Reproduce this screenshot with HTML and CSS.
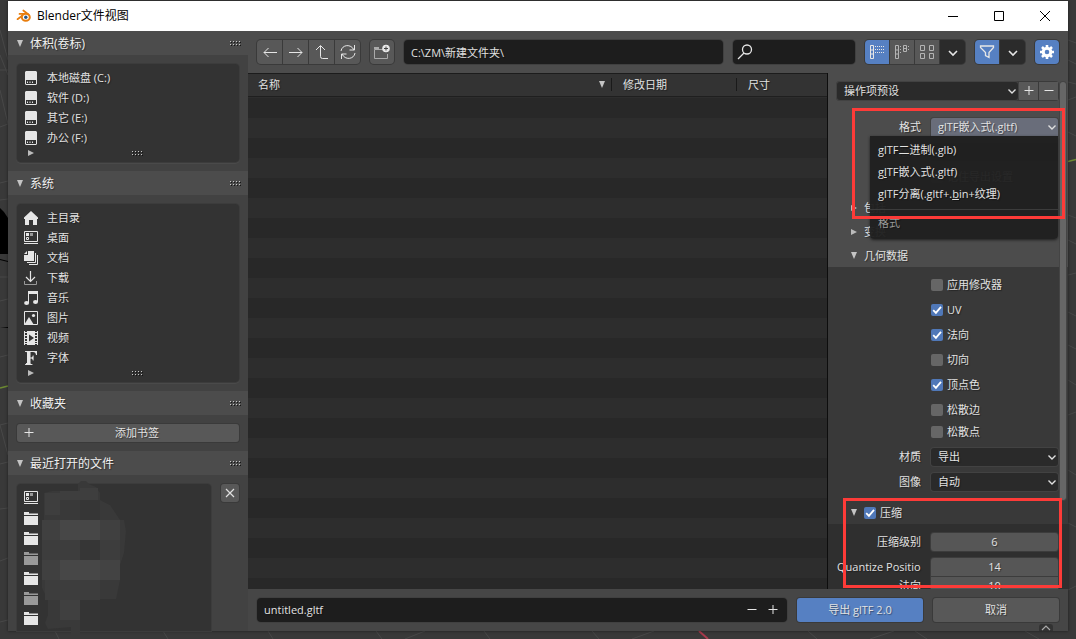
FILE: index.html
```html
<!DOCTYPE html>
<html lang="zh-CN">
<head>
<meta charset="utf-8">
<title>Blender文件视图</title>
<link rel="stylesheet" href="styles.css">
</head>
<body>
<svg width="0" height="0" class="defs" aria-hidden="true">
  <symbol id="disk" viewBox="0 0 14 14"><path fill="#e6e6e6" d="M2 0h10l1 1v12l-1 1H2l-1-1V1z"/><path fill="#333" d="M2 9h10v4H2z"/><path fill="#e6e6e6" d="M3 10.500h1v1.500H3zM5.500 10.500h1v1.500h-1zM8 10.500h1v1.500H8z"/></symbol>
  <symbol id="desk" viewBox="0 0 14 14"><path fill="none" stroke="#e6e6e6" d="M.5.5h13v10H.5z"/><path fill="#e6e6e6" d="M0 12h14v1H0zM2 2h3v3H2z"/><path fill="#999" d="M6 2h3v3H6z"/><path fill="none" stroke="#e6e6e6" d="M2.500 6.500h2v2h-2z"/></symbol>
  <symbol id="folder" viewBox="0 0 14 14"><path d="M0 1h5v1.500h9V4H0zM0 5h14v9H0z"/></symbol>
  <symbol id="down" viewBox="0 0 12 12"><path fill="none" stroke="#e0e0e0" stroke-width="1.400" d="M2.500 4.500L6 8l3.500-3.500"/></symbol>
  <symbol id="tri" viewBox="0 0 8 8"><path fill="#c4c4c4" d="M1 0h6L4 7z"/></symbol>
  <symbol id="tri-r" viewBox="0 0 8 8"><path fill="#bbb" d="M1 1v6l6-3z"/></symbol>
  <symbol id="plus" viewBox="0 0 12 12"><path fill="none" stroke="#e6e6e6" d="M1.500 5.500h9M6 1v9"/></symbol>
  <symbol id="minus" viewBox="0 0 12 12"><path fill="none" stroke="#e6e6e6" d="M1.500 5.500h9"/></symbol>
  <symbol id="grip" viewBox="0 0 11 5"><path stroke="#151515" stroke-dasharray="1 2" d="M1 1.500h10M1 4.500h10"/><path stroke="#c8c8c8" stroke-dasharray="1 2" d="M0 .5h10M0 3.500h10"/></symbol>
</svg>

<svg class="scene" viewBox="0 0 1076 639" preserveAspectRatio="none" aria-hidden="true">
  <path d="M0 30l8 30M0 55l8 20M0 70h8M0 90l8 34M0 127l8-3M0 183l8-2M0 200l8-1M0 277h8M0 301l8-2M0 357l8-2M0 425l8-2M0 425l8 30M0 464l8-2M0 509l8-1M0 561l8-3M0 622l8-2M1068 40l8 3M1068 60l8 4M1068 82l8 2M1068 100l8-3M1068 132l8 4M1068 215l8 3M1068 240l8 4M1068 275l8-2M1068 312l8 4M1068 345l8 4M1068 380l8 5M1068 415l8-3M1068 470l8 5M1068 523l8 4M1068 590l8-4M55 631l4 8M163 631l5 8M268 631l5 8M376 631l6 8M484 631l6 8M405 639l20-8M592 631l7 8M632 639l22-8M808 631l9 8M870 639l24-8M915 631l12 8M1025 631l14 8" stroke="#484848" fill="none"/>
  <path d="M0 208l4 4 4 6v36H0zM0 259v1l8 2v-1zM0 328l8-1v1H0z"/>
  <path d="M0 388l8-2M1068 161.500l8-2" stroke="#6d8a33" stroke-width="1.500"/>
  <path d="M699 631l9 8" stroke="#a83a4c" stroke-width="2"/>
</svg>

<div class="window">
  <header class="titlebar">
    <svg class="logo" viewBox="0 0 16 14"><path fill="none" stroke="#e87d0d" stroke-width="1.700" stroke-linecap="round" stroke-linejoin="round" d="M1.500 10.200L8.500 5M3.500 4.900h6M7.300 1.500l5.200 4"/><ellipse cx="9.800" cy="8.300" rx="4" ry="3.500" fill="#fff" stroke="#e87d0d" stroke-width="2"/><circle cx="9.800" cy="8.300" r="1.700" fill="#265787"/></svg>
    <h1 class="title">Blender文件视图</h1>
    <button class="winbtn" aria-label="最小化"><svg viewBox="0 0 12 12"><path d="M1 6.500h10"/></svg></button>
    <button class="winbtn" aria-label="最大化"><svg viewBox="0 0 12 12"><path d="M1.500 1.500h9v9h-9z"/></svg></button>
    <button class="winbtn" aria-label="关闭"><svg viewBox="0 0 12 12"><path d="M1 1l10 10M11 1L1 11"/></svg></button>
  </header>

  <div class="content">
    <aside class="sidebar">
      <section>
        <h2 class="phead"><svg class="tri"><use href="#tri"/></svg><span>体积(卷标)</span><svg class="grip"><use href="#grip"/></svg></h2>
        <div class="pbody"><div class="box">
          <button class="place"><svg><use href="#disk"/></svg>本地磁盘 (C:)</button>
          <button class="place"><svg><use href="#disk"/></svg>软件 (D:)</button>
          <button class="place"><svg><use href="#disk"/></svg>其它 (E:)</button>
          <button class="place"><svg><use href="#disk"/></svg>办公 (F:)</button>
          <div class="boxfoot"><svg class="tri"><use href="#tri-r"/></svg><svg class="grip"><use href="#grip"/></svg></div>
        </div></div>
      </section>
      <section>
        <h2 class="phead"><svg class="tri"><use href="#tri"/></svg><span>系统</span><svg class="grip"><use href="#grip"/></svg></h2>
        <div class="pbody"><div class="box">
          <button class="place"><svg viewBox="0 0 14 14"><path fill="#e6e6e6" d="M7 0l7 6.500V8h-1v6H9V9H5v5H1V8H0V6.500z"/></svg>主目录</button>
          <button class="place"><svg><use href="#desk"/></svg>桌面</button>
          <button class="place"><svg viewBox="0 0 14 14"><path fill="#e6e6e6" d="M4 0h6v10H0V4h4z"/><path fill="#e6e6e6" d="M0 3l3-3v3z"/><path fill="none" stroke="#e6e6e6" d="M11.500 2v9.500H3M13.500 4v9.500H5"/></svg>文档</button>
          <button class="place"><svg viewBox="0 0 14 14"><path fill="none" stroke="#e6e6e6" stroke-width="1.200" d="M6.500 0v10M2 6l4.500 4.500L11 6"/><path fill="none" stroke="#999" d="M.5 10v3.500h12V10"/></svg>下载</button>
          <button class="place"><svg viewBox="0 0 14 14"><path fill="#e6e6e6" d="M4 0h10v11h-1V3H5v9H4z"/><ellipse cx="2.600" cy="12" rx="2.500" ry="1.900" fill="#e6e6e6"/><ellipse cx="11.500" cy="11" rx="2.500" ry="1.900" fill="#e6e6e6"/></svg>音乐</button>
          <button class="place"><svg viewBox="0 0 14 14"><path fill="none" stroke="#e6e6e6" d="M9 13.500h4.500V.5H.5v13H2"/><path fill="#e6e6e6" d="M0 14l5-8 5 8z"/><circle cx="9.500" cy="4.500" r="1.600" fill="#e6e6e6"/></svg>图片</button>
          <button class="place"><svg viewBox="0 0 14 14"><path fill="#e6e6e6" d="M0 0h1v1h2V0h8v1h2V0h1v14h-1v-1h-2v1H3v-1H1v1H0z"/><path fill="#333" d="M1 2h2v2H1zM1 5h2v2H1zM1 8h2v2H1zM1 11h2v1H1zM11 2h2v2h-2zM11 5h2v2h-2zM11 8h2v2h-2zM11 11h2v1h-2zM5 3.500v7L10 7z"/></svg>视频</button>
          <button class="place"><svg viewBox="0 0 14 14"><path fill="#e6e6e6" d="M1 0h12v4h-1c-.3-2-1-3-3-3H6.500v5.500c1.500 0 2-.5 2.300-2h.8v5h-.8c-.3-1.500-.8-2-2.300-2V12c0 1 .5 1 2 1.200v.8H1v-.8C2.500 13 3 13 3 12V2c0-1-.5-1-2-1.200z"/></svg>字体</button>
          <div class="boxfoot"><svg class="tri"><use href="#tri-r"/></svg><svg class="grip"><use href="#grip"/></svg></div>
        </div></div>
      </section>
      <section>
        <h2 class="phead"><svg class="tri"><use href="#tri"/></svg><span>收藏夹</span><svg class="grip"><use href="#grip"/></svg></h2>
        <div class="pbody"><button class="btn bookmark"><svg><use href="#plus"/></svg><span>添加书签</span></button></div>
      </section>
      <section class="recent">
        <h2 class="phead"><svg class="tri"><use href="#tri"/></svg><span>最近打开的文件</span><svg class="grip"><use href="#grip"/></svg></h2>
        <div class="pbody recent-body">
          <div class="box recent-box">
            <button class="place" aria-label="桌面"><svg><use href="#desk"/></svg></button>
            <button class="place" aria-label="文件夹 1"><svg><use href="#folder"/></svg></button>
            <button class="place" aria-label="文件夹 2"><svg><use href="#folder"/></svg></button>
            <button class="place dim" aria-label="文件夹 3"><svg><use href="#folder"/></svg></button>
            <button class="place" aria-label="文件夹 4"><svg><use href="#folder"/></svg></button>
            <button class="place dim" aria-label="文件夹 5"><svg><use href="#folder"/></svg></button>
            <button class="place" aria-label="文件夹 6"><svg><use href="#folder"/></svg></button>
            <svg class="mosaic" viewBox="0 0 90 160" aria-hidden="true">
              <path fill="#393939" d="M2 12L10 10H22L26 12L36 10V3L39 0H44L47 3L54 6L58 12V19L68 24L78 39H82L84 50L82 72L78 84V99L74 118H58V139H56V150H38V157H29V146L6 148L3 142L6 134V119L0 107V90L2 70L0 50L2 39Z"/>
              <path fill="#3e3e3e" d="M3 12h15v22H3zM18 10h20v9H18zM38 7h18v12H38z"/>
              <path fill="#363636" d="M38 19h20v20H38zM38 59h20v20H38z"/>
              <path fill="#474747" d="M18 39h40v20H18zM18 79h40v20H18z"/>
              <path fill="#404040" d="M0 39h18v20H0zM58 39h20v20H58zM0 79h18v20H0zM18 119h20v20H18z"/>
              <path fill="#3d3d3d" d="M0 59h38v20H0zM58 59h20v20H58zM3 99h15v20H3zM18 99h40v20H18z"/>
              <path fill="#434343" d="M58 79h20v20H58z"/>
              <path fill="#343434" d="M38 119h20v31H38z"/>
            </svg>
          </div>
          <button class="btn clear" aria-label="清除"><svg viewBox="0 0 12 12"><path stroke="#e0e0e0" stroke-width="1.200" d="M2 2l8 8M10 2l-8 8"/></svg></button>
        </div>
      </section>
    </aside>

    <main class="main">
      <div class="toolbar">
        <div class="group">
          <button aria-label="后退"><svg viewBox="0 0 16 16"><path d="M15 8.500H2M6.500 4L2 8.500 6.500 13"/></svg></button>
          <button aria-label="前进"><svg viewBox="0 0 16 16"><path d="M1 8.500h13M9.500 4L14 8.500 9.500 13"/></svg></button>
          <button aria-label="上级"><svg viewBox="0 0 16 16"><path d="M2 6l4.500-4.500L11 6M6.500 2v10.500q0 2 2 2H14"/></svg></button>
          <button aria-label="刷新"><svg viewBox="0 0 16 16"><path d="M1 7C2 .5 11-.5 14 6M14.500 1v5h-5M15 9c-1 6.500-10 7.500-13 1M1.500 15v-5h5"/></svg></button>
        </div>
        <div class="group">
          <button aria-label="新建文件夹"><svg viewBox="0 0 16 16"><path fill="#aaa" stroke="none" d="M0 3h5v2H0z"/><path stroke="#aaa" d="M9 5.500H.5v9h13V10"/><circle cx="12" cy="4.500" r="3.800" fill="#e6e6e6" stroke="none"/><path stroke="#444" d="M12 2.500v4M10 4.500h4"/></svg></button>
        </div>
        <input class="field path" aria-label="路径" value="C:\ZM\新建文件夹\">
        <label class="field search"><svg viewBox="0 0 16 16"><circle cx="10" cy="5.500" r="4.500"/><path d="M7 9l-6 6"/></svg><input aria-label="搜索"></label>
        <div class="group">
          <button class="on" aria-label="垂直列表"><svg viewBox="0 0 16 16"><path d="M1.500 1.500h3v13h-3zM1.500 6h3M1.500 10h3"/><path stroke-dasharray="1 1" d="M6 2.500h10M6 5.500h10M6 8.500h10"/></svg></button>
          <button aria-label="水平列表"><svg viewBox="0 0 16 16" class="soft"><path d="M1.500 1.500h3v13h-3zM1.500 6h3M1.500 10h3M9.500 1.500h3v6h-3zM9.500 4.500h3"/><path stroke-dasharray="1 2" d="M6.500 2v8M14.500 2v6"/></svg></button>
          <button aria-label="缩略图"><svg viewBox="0 0 16 16" class="soft"><path d="M1.500 1.500h4v5h-4zM10.500 1.500h4v5h-4zM1.500 9.500h4v5h-4zM10.500 9.500h4v5h-4z"/></svg></button>
          <button class="dark" aria-label="显示设置"><svg viewBox="0 0 16 16"><path stroke-width="1.600" d="M4 7l4 4 4-4"/></svg></button>
        </div>
        <div class="group">
          <button class="on" aria-label="筛选"><svg viewBox="0 0 16 16"><path stroke-width="1.300" d="M1.500 2h13v1.500L10 8.500v5L6.500 11.500v-3L1.500 3.500z"/></svg></button>
          <button class="dark" aria-label="筛选设置"><svg viewBox="0 0 16 16"><path stroke-width="1.600" d="M4 7l4 4 4-4"/></svg></button>
        </div>
        <div class="group">
          <button class="on" aria-label="选项"><svg viewBox="0 0 16 16"><circle cx="8" cy="8" r="3.800" stroke="#fff" stroke-width="3"/><path stroke="#fff" stroke-width="2.600" d="M8 1v2.500M8 12.500V15M1 8h2.500M12.500 8H15M3 3l1.800 1.800M11.200 11.200L13 13M13 3l-1.800 1.800M4.800 11.200L3 13"/></svg></button>
        </div>
      </div>

      <div class="middle">
        <div class="files">
          <table class="filetable">
            <thead><tr><th>名称<svg class="tri sort"><use href="#tri"/></svg></th><th class="c-date">修改日期</th><th class="c-size">尺寸</th></tr></thead>
          </table>
        </div>

        <form class="options">
          <div class="sect top">
            <div class="preset">
              <div class="sel"><select aria-label="操作项预设"><option>操作项预设</option></select><svg><use href="#down"/></svg></div>
              <button type="button" class="btn" aria-label="添加预设"><svg><use href="#plus"/></svg></button>
              <button type="button" class="btn" aria-label="移除预设"><svg><use href="#minus"/></svg></button>
            </div>
            <div class="row format"><label for="fmt">格式</label>
              <div class="sel open"><select id="fmt"><option>glTF嵌入式(.gltf)</option></select><svg><use href="#down"/></svg></div>
              <div class="menu">
                <button type="button"><u>g</u>lTF二进制(.glb)</button>
                <button type="button">g<u>l</u>TF嵌入式(.gltf)</button>
                <button type="button">glTF分离(.gltf+.<u>b</u>in+纹理)</button>
                <hr>
                <p>格式</p>
              </div>
            </div>
            <div class="row"><label for="copy">版权</label><input id="copy" class="text"></div>
            <label class="check"><input type="checkbox">记住导出设置</label>
          </div>
          <h3 class="ohead"><svg class="tri"><use href="#tri-r"/></svg>包括</h3>
          <h3 class="ohead"><svg class="tri"><use href="#tri-r"/></svg>变换</h3>
          <h3 class="ohead"><svg class="tri"><use href="#tri"/></svg>几何数据</h3>
          <div class="sect geo">
            <label class="check"><input type="checkbox">应用修改器</label>
            <label class="check"><input type="checkbox" checked>UV</label>
            <label class="check"><input type="checkbox" checked>法向</label>
            <label class="check"><input type="checkbox">切向</label>
            <label class="check"><input type="checkbox" checked>顶点色</label>
            <div class="pair">
              <label class="check"><input type="checkbox">松散边</label>
              <label class="check"><input type="checkbox">松散点</label>
            </div>
            <div class="row"><label for="mat">材质</label><div class="sel"><select id="mat"><option>导出</option></select><svg><use href="#down"/></svg></div></div>
            <div class="row"><label for="img">图像</label><div class="sel"><select id="img"><option>自动</option></select><svg><use href="#down"/></svg></div></div>
          </div>
          <h3 class="ohead sub"><svg class="tri"><use href="#tri"/></svg><label class="check"><input type="checkbox" checked>压缩</label></h3>
          <div class="sect deep">
            <div class="row"><label for="lvl">压缩级别</label><input id="lvl" class="num" value="6"></div>
            <div class="joined">
              <div class="row"><label for="qp" class="natural">Quantize Positio</label><input id="qp" class="num first" value="14"></div>
              <div class="row"><label for="qn">法向</label><input id="qn" class="num last" value="10"></div>
            </div>
          </div>
          <div class="scroll"></div>
        </form>
        <div class="mark mark-format"></div>
        <div class="mark mark-compress"></div>
      </div>

      <footer class="footer">
        <div class="field filename"><input aria-label="文件名" value="untitled.gltf"><button aria-label="减小"><svg><use href="#minus"/></svg></button><button aria-label="增加"><svg><use href="#plus"/></svg></button></div>
        <button class="btn action primary">导出 glTF 2.0</button>
        <button class="btn action">取消</button>
        <span class="tab"><svg viewBox="0 0 12 7"><path fill="none" stroke="#aaa" stroke-width="1.200" d="M2 6l4-4 4 4"/></svg></span>
      </footer>
    </main>
  </div>
</div>
</body>
</html>
```
FILE: styles.css
```css
* { box-sizing: border-box; }

body {
  margin: 0;
  height: 100vh;
  padding: 1px 8px 8px;
  overflow: hidden;
  background: #393939;
  color: #e2e2e2;
  font: 11px/18px "Open Sans", "Noto Sans CJK SC", sans-serif;
}

.defs, .scene { position: absolute; }
.scene { inset: 0; width: 100%; height: 100%; }

button, input, select {
  margin: 0;
  padding: 0;
  border: 0;
  border-radius: 0;
  background: none;
  color: inherit;
  font: inherit;
  text-shadow: inherit;
  outline: 0;
  min-width: 0;
}

svg { display: block; flex: none; }
h1, h2, h3, p { margin: 0; font-weight: normal; }

.window {
  position: relative;
  height: 100%;
  display: flex;
  flex-direction: column;
  box-shadow: 0 0 3px rgba(0, 0, 0, .5);
  text-shadow: 1px 1px 1px rgba(0, 0, 0, .4);
}

/* Title bar */
.titlebar {
  flex: none;
  height: 30px;
  display: flex;
  align-items: center;
  background: #fff;
  color: #000;
  text-shadow: none;
}
.logo { width: 16px; height: 14px; margin: 0 5px 0 8px; }
.title { flex: 1; font: 12px/18px "Open Sans", "Noto Sans CJK SC", sans-serif; }
.winbtn { width: 46px; height: 30px; display: grid; place-items: center; }
.winbtn svg { width: 12px; height: 12px; fill: none; stroke: #000; }

.content { flex: 1; min-height: 0; display: flex; }

/* Sidebar */
.sidebar {
  flex: none;
  width: 240px;
  display: flex;
  flex-direction: column;
  background: #424242;
}
.phead {
  height: 24px;
  padding: 1px 7px 0 8px;
  display: flex;
  align-items: center;
  gap: 6px;
  background: #4c4c4c;
  font-size: 12px;
  color: #f0f0f0;
}
.phead span { flex: 1; }
.tri { width: 8px; height: 8px; }
.grip { width: 11px; height: 5px; }
.pbody { padding: 9px; }
.box {
  padding: 4px 0 2px;
  background: #333;
  border-radius: 4px;
  box-shadow: 0 0 0 1px #3c3c3c, 0 1px 0 1px #4a4a4a;
}
.place {
  width: 100%;
  height: 20px;
  padding-left: 7px;
  display: flex;
  align-items: center;
  gap: 9px;
  text-align: left;
}
.place svg { width: 14px; height: 14px; fill: #e6e6e6; }
.place.dim svg { fill: #999; }
.boxfoot { height: 12px; padding: 0 0 2px 10px; display: flex; align-items: center; gap: 97px; }

.btn {
  display: flex;
  align-items: center;
  justify-content: center;
  background: #585858;
  border-radius: 3px;
  box-shadow: 0 0 0 1px #3a3a3a;
}
.btn svg { width: 12px; height: 12px; }
.bookmark { width: 100%; height: 18px; padding-left: 6px; }
.bookmark span { flex: 1; }

.recent { flex: 1; min-height: 0; display: flex; flex-direction: column; }
.recent-body { flex: 1; min-height: 0; padding-bottom: 0; display: flex; gap: 10px; align-items: flex-start; }
.recent-box { position: relative; flex: 1; height: 100%; border-radius: 4px 4px 0 0; box-shadow: 0 0 0 1px #3c3c3c; }
.clear { width: 18px; height: 18px; }
.mosaic { position: absolute; left: 25px; top: -3px; }
.recent-box .mosaic { width: 90px; height: 160px; }

/* Main column */
.main { flex: 1; min-width: 0; display: flex; flex-direction: column; background: #4c4c4c; }
.toolbar { flex: none; height: 42px; padding: 0 9px; display: flex; align-items: center; gap: 10px; }
.group {
  display: flex;
  gap: 1px;
  background: #3a3a3a;
  border-radius: 4px;
  box-shadow: 0 0 0 1px #3a3a3a;
  overflow: hidden;
}
.group button { width: 24px; height: 24px; display: grid; place-items: center; background: #585858; }
.group:first-child button { width: 25px; }
.group svg { width: 16px; height: 16px; fill: none; stroke: #e6e6e6; }
.group .soft { stroke: #b4b4b4; }
.group .on { background: #5680c2; }
.group .dark { width: 25px; background: #2b2b2b; }
.field { height: 24px; background: #1d1d1d; border-radius: 4px; box-shadow: 0 0 0 1px #404040; }
.path { flex: 320 1 0; padding: 0 7px; }
.search { flex: 120 1 0; min-width: 0; display: flex; align-items: center; padding: 0 4px; gap: 4px; }
.search svg { width: 16px; height: 16px; fill: none; stroke: #e6e6e6; stroke-width: 1.3; }
.search input { flex: 1; width: 0; }

.middle { position: relative; flex: 1; min-height: 0; display: flex; }
.files {
  flex: 1;
  min-width: 0;
  border-right: 1px solid #0d0d0d;
  background: repeating-linear-gradient(#282828 0 20px, #2d2d2d 20px 40px) 0 25px;
}
.filetable { width: 100%; table-layout: fixed; border-collapse: separate; border-spacing: 0; }
.filetable th {
  position: relative;
  height: 24px;
  padding: 0 10px;
  background: #333;
  border-top: 1px solid #1c1c1c;
  border-bottom: 1px solid #1f1f1f;
  font-weight: normal;
  text-align: left;
}
.filetable .c-date { width: 125px; padding: 0 12px; }
.filetable .c-size { width: 91px; padding: 0 12px; }
.c-date::before, .c-size::before { content: ""; position: absolute; left: 0; top: 4px; height: 13px; border-left: 1px solid #1a1a1a; }
.sort { position: absolute; right: 5px; top: 7px; }

/* Export options */
.options { position: relative; flex: none; width: 240px; overflow: hidden; }
.sect { padding: 9px 10px 9px 9px; display: grid; gap: 7px; }
.preset { display: flex; gap: 1px; margin-bottom: 11px; border-radius: 3px; background: #3a3a3a; box-shadow: 0 0 0 1px #3a3a3a; }
.preset .sel { flex: 1; }
.preset .btn { width: 19px; height: 18px; border-radius: 0; box-shadow: none; }
.sel { display: grid; height: 18px; background: #2a2a2a; border-radius: 3px; box-shadow: 0 0 0 1px #424242; }
.sel select { grid-area: 1 / 1; appearance: none; padding: 0 20px 0 7px; }
.sel svg { grid-area: 1 / 1; place-self: center end; width: 12px; height: 12px; pointer-events: none; }
.sel.open { background: #696d7a; border-radius: 3px 3px 0 0; }
.row { display: grid; grid-template-columns: 84px 1fr; gap: 10px; height: 18px; }
.row label { text-align: right; white-space: nowrap; }
.row .natural { text-align: left; }
.text { background: #3f3f3f; }
.format { position: relative; }
.menu {
  position: absolute;
  z-index: 1;
  top: 100%;
  right: 0;
  width: 188px;
  padding: 3px 0;
  background: rgba(31, 31, 31, .96);
  border-radius: 0 0 4px 4px;
  box-shadow: 0 1px 3px rgba(0, 0, 0, .6);
}
.menu button { display: block; width: 100%; height: 22px; padding: 0 8px; text-align: left; }
.menu hr { margin: 4px 0 3px; border: 0; border-top: 1px solid #3c3c3c; }
.menu p { padding: 1px 8px 4px; color: #999; }

.check { display: flex; align-items: center; gap: 4px; height: 18px; }
.sect .check { padding-left: 94px; }
.check input { appearance: none; width: 12px; height: 12px; border-radius: 2px; background: #666; }
.check input:checked {
  background: #5078b8 url("data:image/svg+xml,%3Csvg xmlns='http://www.w3.org/2000/svg' viewBox='0 0 12 12'%3E%3Cpath fill='none' stroke='white' stroke-width='1.8' d='M2.200 6.200l2.700 2.700L10 2.800'/%3E%3C/svg%3E");
}
.ohead { height: 24px; padding: 1px 0 0 22px; display: flex; align-items: center; gap: 6px; font-size: 11px; }
.geo, .sub { background: #393939; }
.pair { display: grid; gap: 4px; }
.deep { background: #2f2f2f; }
.joined { display: grid; gap: 1px; }
.num { width: 100%; height: 18px; background: #565656; border-radius: 3px; text-align: center; box-shadow: 0 0 0 1px #3c3c3c; }
.num.first { border-radius: 3px 3px 0 0; }
.num.last { border-radius: 0; }
.scroll { position: absolute; top: 9px; right: 2px; width: 6px; height: 418px; border-radius: 3px; background: #666; box-shadow: 0 0 0 1px #444; }

.mark { position: absolute; z-index: 2; border: 3px solid #fd3b38; pointer-events: none; }
.mark-format { right: 3px; top: 35px; width: 213px; height: 111px; }
.mark-compress { right: 6px; bottom: 1px; width: 219px; height: 90px; }

/* Footer */
.footer { position: relative; flex: none; height: 42px; padding: 0 9px; display: flex; align-items: center; gap: 10px; background: #464646; }
.filename { flex: 1; padding: 0 8px 0 7px; display: flex; align-items: center; gap: 9px; }
.filename input { flex: 1; }
.filename svg { width: 12px; height: 12px; }
.action { width: 126px; height: 24px; }
.primary { background: #5680c2; }
.tab { position: absolute; right: 15px; bottom: 0; width: 14px; height: 7px; background: #333; border-radius: 3px 3px 0 0; display: grid; place-items: center; }
.tab svg { width: 12px; height: 7px; }
```
